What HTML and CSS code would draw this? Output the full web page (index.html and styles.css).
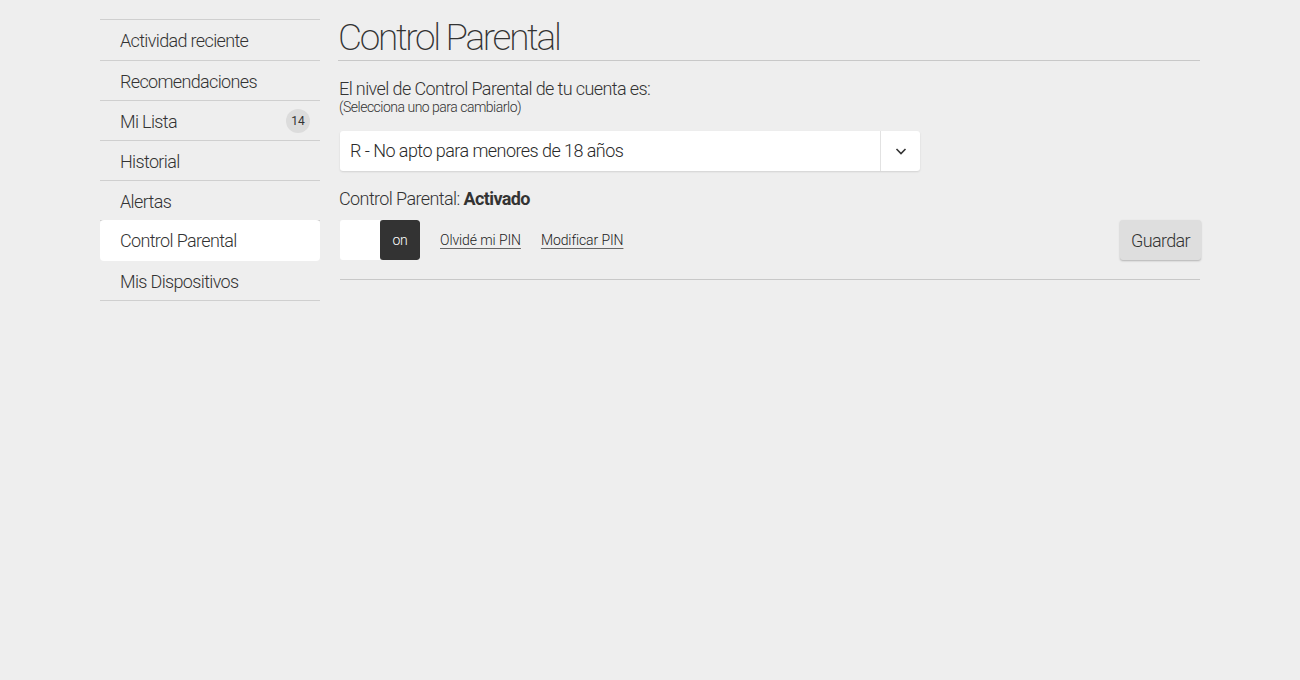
FILE: index.html
```html
<!DOCTYPE html>
<html lang="es">
<head>
<meta charset="utf-8">
<title>Control Parental</title>
<link rel="stylesheet" href="styles.css">
</head>
<body>
<div class="page">
  <nav class="sidebar">
    <a class="nav-item">Actividad reciente</a>
    <a class="nav-item">Recomendaciones</a>
    <a class="nav-item">Mi Lista <span class="badge">14</span></a>
    <a class="nav-item">Historial</a>
    <a class="nav-item">Alertas</a>
    <a class="nav-item active">Control Parental</a>
    <a class="nav-item">Mis Dispositivos</a>
  </nav>
  <main class="content">
    <h1 class="title">Control Parental</h1>
    <div class="level">
      <p class="level-label">El nivel de Control Parental de tu cuenta es:</p>
      <p class="level-hint">(Selecciona uno para cambiarlo)</p>
    </div>
    <div class="select">
      <span class="select-value">R - No apto para menores de 18 años</span>
      <span class="select-arrow">
        <svg width="14" height="14" viewBox="0 0 14 14"><path d="M2.5 5 L7 9.5 L11.5 5" fill="none" stroke="#333" stroke-width="1.6"/></svg>
      </span>
    </div>
    <p class="status">Control Parental: <strong>Activado</strong></p>
    <div class="actions">
      <div class="toggle"><span class="toggle-off"></span><span class="toggle-on">on</span></div>
      <a class="link">Olvidé mi PIN</a>
      <a class="link">Modificar PIN</a>
      <button class="save">Guardar</button>
    </div>
  </main>
</div>
</body>
</html>
```
FILE: styles.css
```css
* { box-sizing: border-box; }
html, body { margin: 0; padding: 0; }
body {
  background: #eeeeee;
  color: #333;
  font-family: Roboto, "Liberation Sans", sans-serif;
  font-weight: 300;
}
.page {
  display: flex;
  gap: 20px;
  padding: 19px 100px 0 100px;
}
.sidebar {
  width: 220px;
  flex: none;
  display: flex;
  flex-direction: column;
  border-top: 1px solid #cfcfcf;
}
.nav-item {
  display: flex;
  align-items: center;
  justify-content: space-between;
  height: 40px;
  padding: 1px 10px 0 20px;
  font-size: 18px;
  letter-spacing: -0.65px;
  color: #333;
  border-bottom: 1px solid #cfcfcf;
}
.nav-item:first-child { height: 41px; }
.nav-item.active {
  background: #fff;
  border-radius: 4px;
  border-bottom-color: transparent;
  margin-top: -1px;
  height: 41px;
}
.badge {
  width: 24px;
  height: 24px;
  border-radius: 50%;
  background: #dcdcdc;
  font-size: 12px;
  font-weight: 400;
  letter-spacing: 0;
  display: flex;
  align-items: center;
  justify-content: center;
}
.content {
  flex: 1;
  display: flex;
  flex-direction: column;
}
.title {
  margin: 0 0 0 -2px;
  font-size: 37px;
  font-weight: 200;
  letter-spacing: -2.3px;
  line-height: 37px;
  height: 42px;
  border-bottom: 1px solid #c8c8c8;
  color: #333;
}
.level { margin: 18px 0 0 -1px; }
.level-label {
  margin: 0;
  font-size: 18px;
  line-height: 20px;
  letter-spacing: -0.6px;
}
.level-hint {
  margin: 0;
  font-size: 14px;
  line-height: 16px;
  letter-spacing: -0.5px;
}
.select {
  margin-top: 16px;
  width: 580px;
  height: 40px;
  background: #fff;
  border-radius: 3px;
  box-shadow: 0 1px 2px rgba(0,0,0,0.12);
  display: flex;
  align-items: center;
}
.select-value {
  flex: 1;
  padding: 0 0 1px 10px;
  font-size: 18px;
  font-weight: 300;
  letter-spacing: -0.55px;
  color: #2a2a2a;
}
.select-arrow {
  width: 40px;
  height: 40px;
  border-left: 1px solid #e2e2e2;
  display: flex;
  align-items: center;
  justify-content: center;
}
.status {
  margin: 16px 0 0 -1px;
  font-size: 18px;
  line-height: 24px;
  letter-spacing: -0.6px;
}
.status strong { font-weight: 700; }
.actions {
  margin-top: 9px;
  height: 60px;
  padding-bottom: 19px;
  display: flex;
  align-items: center;
  gap: 20px;
  border-bottom: 1px solid #c8c8c8;
}
.actions .link:last-of-type { margin-right: auto; }
.toggle {
  display: flex;
  width: 80px;
  height: 40px;
  border-radius: 3px;
  overflow: hidden;
}
.toggle-off { width: 40px; background: #fff; }
.toggle-on {
  width: 40px;
  background: #333;
  color: #fff;
  font-size: 14px;
  font-weight: 300;
  letter-spacing: -0.2px;
  display: flex;
  align-items: center;
  justify-content: center;
  border-radius: 3px;
}
.link {
  font-size: 14px;
  font-weight: 300;
  letter-spacing: -0.1px;
  color: #222;
  text-decoration: underline;
  text-decoration-color: #666;
  text-underline-offset: 3px;
}
.save {
  height: 40px;
  width: 81px;
  background: #dedede;
  border: none;
  border-radius: 3px;
  box-shadow: 0 1px 2px rgba(0,0,0,0.25);
  font-family: Roboto, "Liberation Sans", sans-serif;
  font-size: 18px;
  font-weight: 300;
  letter-spacing: -0.65px;
  color: #333;
  margin-right: -1px;
  padding: 0;
}
```
